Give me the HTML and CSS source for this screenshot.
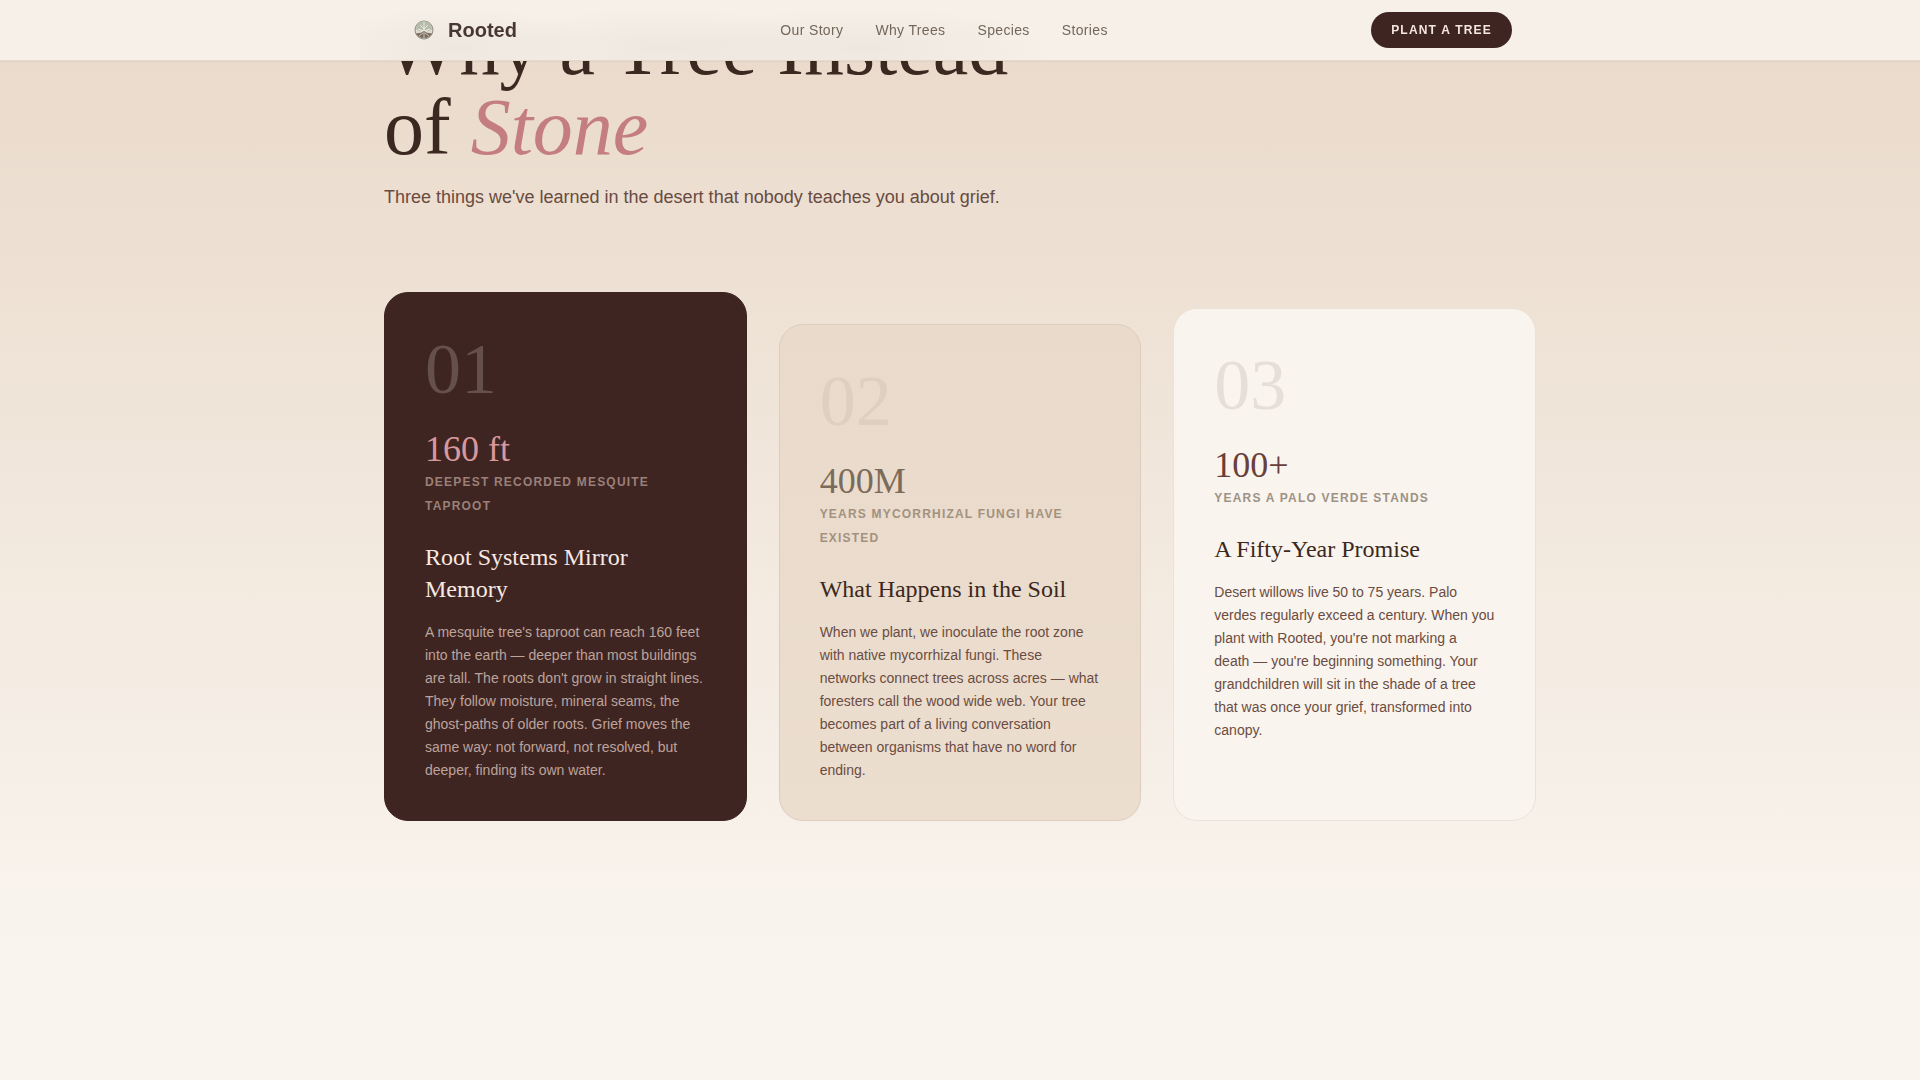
FILE: index.html
```
<!DOCTYPE html>
<html lang="en">
<head>
<meta charset="utf-8">
<meta name="viewport" content="width=device-width, initial-scale=1">
<title>Rooted</title>
<link rel="stylesheet" href="styles.css">
</head>
<body>
<header class="nav">
	<div class="nav-inner">
		<a href="#" class="logo">
			<svg class="logo-mark" viewBox="0 0 32 32" aria-hidden="true">
				<circle cx="16" cy="16" r="9" fill="#dfdbd0" stroke="#8f897b" stroke-width="1"/>
				<path d="M8 15a8 8 0 0 1 16 0l-3 2-3-1h-4l-3 1z" fill="#b4bbab"/>
				<path d="M16 8v10M16 15l-4-4M16 15l4-4M16 17l-6-2M16 17l6-2" fill="none" stroke="#efe9df" stroke-width="1"/>
				<path d="M8 19q4 1 8-2q4 3 8 2q-2 5-8 5t-8-5z" fill="#75695c"/>
				<path d="M16 18v6M15 19l-4 3M17 19l4 3" fill="none" stroke="#d3c9bb" stroke-width="1"/>
			</svg>
			<span>Rooted</span>
		</a>
		<nav class="nav-links">
			<a href="#story">Our Story</a>
			<a href="#why">Why Trees</a>
			<a href="#species">Species</a>
			<a href="#stories">Stories</a>
		</nav>
		<button type="button" class="btn-plant">Plant a Tree</button>
	</div>
</header>
<main>
	<section class="why" id="why">
		<div class="container">
			<div class="why-header">
				<h2>Why a Tree Instead of <em>Stone</em></h2>
				<p>Three things we've learned in the desert that nobody teaches you about grief.</p>
			</div>
			<div class="cards">
				<article class="card card-dark">
					<div class="card-number">01</div>
					<div class="card-stat">160 ft</div>
					<div class="card-label">Deepest recorded mesquite taproot</div>
					<h3>Root Systems Mirror Memory</h3>
					<p>A mesquite tree's taproot can reach 160 feet into the earth — deeper than most buildings are tall. The roots don't grow in straight lines. They follow moisture, mineral seams, the ghost-paths of older roots. Grief moves the same way: not forward, not resolved, but deeper, finding its own water.</p>
				</article>
				<article class="card card-sand">
					<div class="card-number">02</div>
					<div class="card-stat">400M</div>
					<div class="card-label">Years mycorrhizal fungi have existed</div>
					<h3>What Happens in the Soil</h3>
					<p>When we plant, we inoculate the root zone with native mycorrhizal fungi. These networks connect trees across acres — what foresters call the wood wide web. Your tree becomes part of a living conversation between organisms that have no word for ending.</p>
				</article>
				<article class="card card-cream">
					<div class="card-number">03</div>
					<div class="card-stat">100+</div>
					<div class="card-label">Years a palo verde stands</div>
					<h3>A Fifty-Year Promise</h3>
					<p>Desert willows live 50 to 75 years. Palo verdes regularly exceed a century. When you plant with Rooted, you're not marking a death — you're beginning something. Your grandchildren will sit in the shade of a tree that was once your grief, transformed into canopy.</p>
				</article>
			</div>
		</div>
	</section>
</main>
</body>
</html>
```
FILE: styles.css
```
* {
	box-sizing: border-box;
	margin: 0;
	padding: 0;
}
body {
	background: #f9f5ee;
	color: #3b2820;
	font-family: "Liberation Sans", Arial, sans-serif;
	min-height: 100vh;
}
a {
	color: inherit;
	text-decoration: none;
}

/* nav */
.nav {
	position: fixed;
	top: 0;
	left: 0;
	right: 0;
	z-index: 10;
	background: #f7f0e9;
	border-bottom: 1px solid #e6dacd;
	box-shadow: 0 1px 1px rgba(59, 40, 32, 0.04);
}
.nav-inner {
	display: flex;
	align-items: center;
	justify-content: space-between;
	max-width: 1200px;
	margin: 0 auto;
	padding: 12px 48px;
	/* soft smudge under the bar */
	background:
		radial-gradient(ellipse 12% 70% at 8% 80%, rgba(90, 90, 80, 0.06), transparent),
		radial-gradient(ellipse 14% 70% at 25% 80%, rgba(90, 90, 80, 0.06), transparent),
		radial-gradient(ellipse 16% 70% at 42% 80%, rgba(90, 90, 80, 0.06), transparent);
}
.logo {
	display: flex;
	align-items: center;
	gap: 8px;
	font-size: 20px;
	font-weight: bold;
	color: #483733;
}
.logo-mark {
	width: 32px;
	height: 32px;
}
.nav-links {
	display: flex;
	gap: 32px;
	font-size: 14px;
	letter-spacing: 0.025em;
	color: #74675a;
}
.btn-plant {
	height: 36px;
	padding: 0 20px;
	border: none;
	border-radius: 18px;
	background: #3f2522;
	color: #f5e6e0;
	font-family: inherit;
	font-size: 12px;
	font-weight: bold;
	letter-spacing: 0.1em;
	text-transform: uppercase;
	cursor: pointer;
}

/* why trees */
.why {
	padding: 7px 0 120px;
	background: linear-gradient(180deg, #e9d9c9 0%, #f9f4ee 100%);
}
.container {
	max-width: 1280px;
	margin: 0 auto;
	padding: 0 64px;
}
.why-header {
	max-width: 672px;
	margin-bottom: 80px;
}
.why-header h2 {
	margin-bottom: 16px;
	font-family: "Liberation Serif", "Times New Roman", serif;
	font-size: 80px;
	font-weight: normal;
	line-height: 80px;
}
.why-header em {
	color: #c47d82;
}
.why-header p {
	font-size: 18px;
	line-height: 29px;
	color: #684b41;
}
.cards {
	display: grid;
	grid-template-columns: repeat(3, 1fr);
	gap: 32px;
}
.card {
	padding: 40px 40px 38px;
	border: 1px solid transparent;
	border-radius: 24px;
}
.card-number,
.card-stat,
.card h3 {
	font-family: "Liberation Serif", "Times New Roman", serif;
	font-weight: normal;
}
.card-number {
	margin-bottom: 24px;
	font-size: 72px;
	line-height: 72px;
}
.card-stat {
	font-size: 36px;
	line-height: 40px;
}
.card-label {
	margin: 1px 0 23px;
	font-size: 12px;
	font-weight: bold;
	letter-spacing: 0.1em;
	line-height: 24px;
	text-transform: uppercase;
}
.card h3 {
	margin-bottom: 16px;
	font-size: 24px;
	line-height: 32px;
}
.card p {
	font-size: 14px;
	line-height: 23px;
	color: #6b4c42;
}
.card-dark {
	background: #3f2522;
	border-color: #3f2522;
}
.card-dark .card-number { color: #65504c; }
.card-dark .card-stat { color: #d9989c; }
.card-dark .card-label { color: #9a8078; }
.card-dark h3 { color: #f7e9e2; }
.card-dark p { color: #bca39b; }
.card-sand {
	margin-top: 32px;
	background: linear-gradient(180deg, #e9dacb, #ecdece);
	border-color: #dccdbe;
}
.card-sand .card-number { color: #dfcfc1; }
.card-sand .card-stat { color: #7b6b5a; }
.card-sand .card-label { color: #a3917f; }
.card-cream {
	margin-top: 16px;
	background: #f9f4ed;
	border-color: #ebe3da;
}
.card-cream .card-number { color: #e6dfd9; }
.card-cream .card-stat { color: #683f39; }
.card-cream .card-label { color: #9d9285; }
```
